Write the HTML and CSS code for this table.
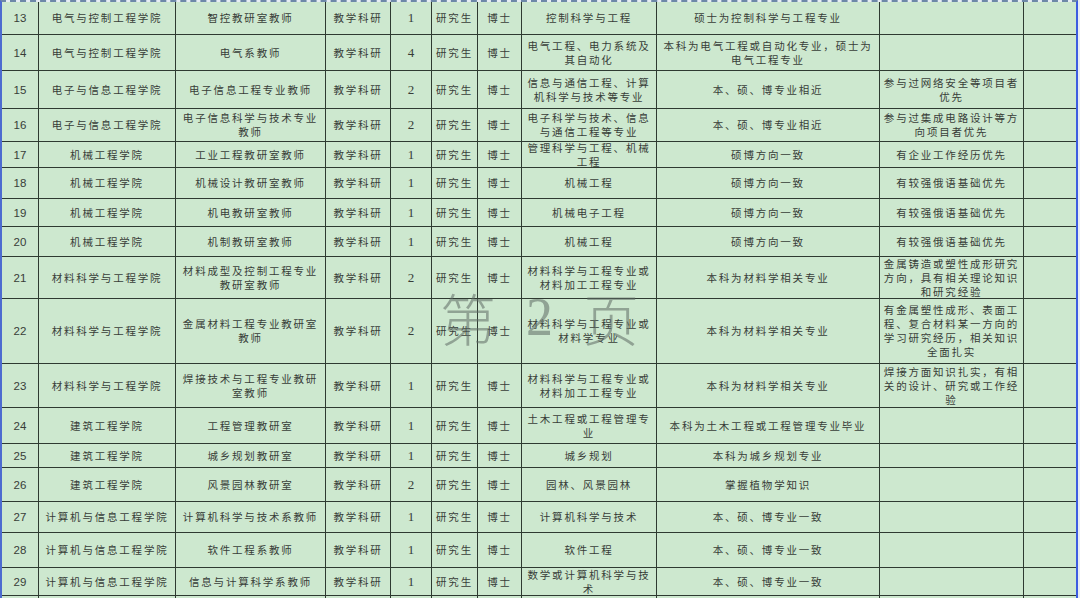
FILE: index.html
```html
<!DOCTYPE html>
<html lang="zh-CN">
<head>
<meta charset="utf-8">
<title>招聘计划 第2页</title>
<link rel="stylesheet" href="styles.css">
</head>
<body>
<div class="sheet">
  <div class="c n">13</div><div class="c">电气与控制工程学院</div><div class="c">智控教研室教师</div><div class="c">教学科研</div><div class="c q">1</div><div class="c">研究生</div><div class="c">博士</div><div class="c">控制科学与工程</div><div class="c">硕士为控制科学与工程专业</div><div class="c"></div><div class="c"></div>
  <div class="c n">14</div><div class="c">电气与控制工程学院</div><div class="c">电气系教师</div><div class="c">教学科研</div><div class="c q">4</div><div class="c">研究生</div><div class="c">博士</div><div class="c">电气工程、电力系统及<br>其自动化</div><div class="c">本科为电气工程或自动化专业，硕士为<br>电气工程专业</div><div class="c"></div><div class="c"></div>
  <div class="c n">15</div><div class="c">电子与信息工程学院</div><div class="c">电子信息工程专业教师</div><div class="c">教学科研</div><div class="c q">2</div><div class="c">研究生</div><div class="c">博士</div><div class="c">信息与通信工程、计算<br>机科学与技术等专业</div><div class="c">本、硕、博专业相近</div><div class="c">参与过网络安全等项目者<br>优先</div><div class="c"></div>
  <div class="c n">16</div><div class="c">电子与信息工程学院</div><div class="c">电子信息科学与技术专业<br>教师</div><div class="c">教学科研</div><div class="c q">2</div><div class="c">研究生</div><div class="c">博士</div><div class="c">电子科学与技术、信息<br>与通信工程等专业</div><div class="c">本、硕、博专业相近</div><div class="c">参与过集成电路设计等方<br>向项目者优先</div><div class="c"></div>
  <div class="c n">17</div><div class="c">机械工程学院</div><div class="c">工业工程教研室教师</div><div class="c">教学科研</div><div class="c q">1</div><div class="c">研究生</div><div class="c">博士</div><div class="c">管理科学与工程、机械<br>工程</div><div class="c">硕博方向一致</div><div class="c">有企业工作经历优先</div><div class="c"></div>
  <div class="c n">18</div><div class="c">机械工程学院</div><div class="c">机械设计教研室教师</div><div class="c">教学科研</div><div class="c q">1</div><div class="c">研究生</div><div class="c">博士</div><div class="c">机械工程</div><div class="c">硕博方向一致</div><div class="c">有较强俄语基础优先</div><div class="c"></div>
  <div class="c n">19</div><div class="c">机械工程学院</div><div class="c">机电教研室教师</div><div class="c">教学科研</div><div class="c q">1</div><div class="c">研究生</div><div class="c">博士</div><div class="c">机械电子工程</div><div class="c">硕博方向一致</div><div class="c">有较强俄语基础优先</div><div class="c"></div>
  <div class="c n">20</div><div class="c">机械工程学院</div><div class="c">机制教研室教师</div><div class="c">教学科研</div><div class="c q">1</div><div class="c">研究生</div><div class="c">博士</div><div class="c">机械工程</div><div class="c">硕博方向一致</div><div class="c">有较强俄语基础优先</div><div class="c"></div>
  <div class="c n">21</div><div class="c">材料科学与工程学院</div><div class="c">材料成型及控制工程专业<br>教研室教师</div><div class="c">教学科研</div><div class="c q">2</div><div class="c">研究生</div><div class="c">博士</div><div class="c">材料科学与工程专业或<br>材料加工工程专业</div><div class="c">本科为材料学相关专业</div><div class="c">金属铸造或塑性成形研究<br>方向，具有相关理论知识<br>和研究经验</div><div class="c"></div>
  <div class="c n">22</div><div class="c">材料科学与工程学院</div><div class="c">金属材料工程专业教研室<br>教师</div><div class="c">教学科研</div><div class="c q">2</div><div class="c">研究生</div><div class="c">博士</div><div class="c">材料科学与工程专业或<br>材料学专业</div><div class="c">本科为材料学相关专业</div><div class="c">有金属塑性成形、表面工<br>程、复合材料某一方向的<br>学习研究经历，相关知识<br>全面扎实</div><div class="c"></div>
  <div class="c n">23</div><div class="c">材料科学与工程学院</div><div class="c">焊接技术与工程专业教研<br>室教师</div><div class="c">教学科研</div><div class="c q">1</div><div class="c">研究生</div><div class="c">博士</div><div class="c">材料科学与工程专业或<br>材料加工工程专业</div><div class="c">本科为材料学相关专业</div><div class="c">焊接方面知识扎实，有相<br>关的设计、研究或工作经<br>验</div><div class="c"></div>
  <div class="c n">24</div><div class="c">建筑工程学院</div><div class="c">工程管理教研室</div><div class="c">教学科研</div><div class="c q">1</div><div class="c">研究生</div><div class="c">博士</div><div class="c">土木工程或工程管理专<br>业</div><div class="c">本科为土木工程或工程管理专业毕业</div><div class="c"></div><div class="c"></div>
  <div class="c n">25</div><div class="c">建筑工程学院</div><div class="c">城乡规划教研室</div><div class="c">教学科研</div><div class="c q">1</div><div class="c">研究生</div><div class="c">博士</div><div class="c">城乡规划</div><div class="c">本科为城乡规划专业</div><div class="c"></div><div class="c"></div>
  <div class="c n">26</div><div class="c">建筑工程学院</div><div class="c">风景园林教研室</div><div class="c">教学科研</div><div class="c q">2</div><div class="c">研究生</div><div class="c">博士</div><div class="c">园林、风景园林</div><div class="c">掌握植物学知识</div><div class="c"></div><div class="c"></div>
  <div class="c n">27</div><div class="c">计算机与信息工程学院</div><div class="c">计算机科学与技术系教师</div><div class="c">教学科研</div><div class="c q">1</div><div class="c">研究生</div><div class="c">博士</div><div class="c">计算机科学与技术</div><div class="c">本、硕、博专业一致</div><div class="c"></div><div class="c"></div>
  <div class="c n">28</div><div class="c">计算机与信息工程学院</div><div class="c">软件工程系教师</div><div class="c">教学科研</div><div class="c q">1</div><div class="c">研究生</div><div class="c">博士</div><div class="c">软件工程</div><div class="c">本、硕、博专业一致</div><div class="c"></div><div class="c"></div>
  <div class="c n">29</div><div class="c">计算机与信息工程学院</div><div class="c">信息与计算科学系教师</div><div class="c">教学科研</div><div class="c q">1</div><div class="c">研究生</div><div class="c">博士</div><div class="c">数学或计算机科学与技<br>术</div><div class="c">本、硕、博专业一致</div><div class="c"></div><div class="c"></div>
  <div class="c"></div><div class="c"></div><div class="c"></div><div class="c"></div><div class="c"></div><div class="c"></div><div class="c"></div><div class="c"></div><div class="c"></div><div class="c"></div><div class="c"></div>
  <div class="watermark"><span>第</span><span class="wm-num">2</span><span>页</span></div>
</div>
</body>
</html>
```
FILE: styles.css
```css
html, body {
  margin: 0;
  padding: 0;
  height: 598px;
  background: #e6ecf4;
  overflow: hidden;
}

.sheet {
  position: relative;
  width: 1074px;
  height: 596px;
  overflow: hidden;
  display: grid;
  grid-template-columns: 36px 136px 149px 64px 40px 45px 43px 134px 222px 143px 52px;
  grid-template-rows: 32px 35px 37px 32px 25px 30px 27px 29px 41px 64px 43px 35px 23px 33px 30px 34px 27px 2px;
  gap: 1px;
  background-color: #2e3a31;
  background-clip: padding-box;
  border-left: 2px solid #4d6bd0;
  border-right: 2px solid #3c5ce0;
  border-top: 2px dashed #6d88a8;
  font-family: "Noto Sans CJK SC", "Noto Sans", sans-serif;
  color: #383d38;
}

.c {
  display: flex;
  align-items: center;
  justify-content: center;
  text-align: center;
  background: #cde8cf;
  font-size: 10.5px;
  line-height: 14px;
  letter-spacing: 1.8px;
  white-space: nowrap;
  overflow: visible;
}

.n {
  font-family: "Liberation Sans", Arial, sans-serif;
  font-size: 11.5px;
  letter-spacing: 0;
}

.q {
  font-family: "Liberation Serif", "Times New Roman", serif;
  font-size: 13px;
  letter-spacing: 0;
}

.watermark {
  position: absolute;
  left: 438px;
  top: 283px;
  display: flex;
  align-items: center;
  gap: 30px;
  font-family: "Noto Sans CJK SC", sans-serif;
  font-weight: 300;
  font-size: 56px;
  line-height: 64px;
  color: rgba(95, 105, 100, 0.55);
  pointer-events: none;
}

.wm-num {
  font-family: "Liberation Serif", serif;
  font-size: 54px;
}
```
